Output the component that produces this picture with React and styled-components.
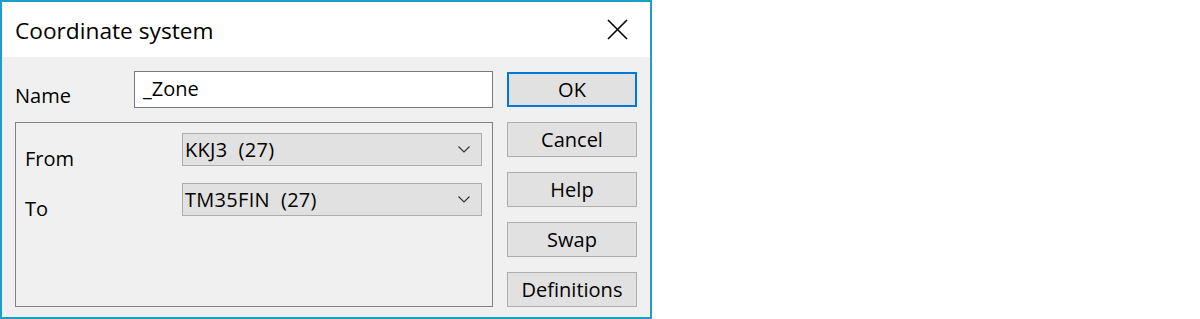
import styled, { createGlobalStyle } from "styled-components";

const Global = createGlobalStyle`
  body {
    margin: 0;
    background: #fff;
    font-family: "Open Sans", "Noto Sans", sans-serif;
  }
`;

const Window = styled.div`
  width: 652px;
  height: 319px;
  box-sizing: border-box;
  border: 2px solid #1c9fc4;
  background: #f0f0f0;
  display: flex;
  flex-direction: column;
`;

const TitleBar = styled.div`
  height: 55px;
  background: #fff;
  display: flex;
  align-items: center;
  justify-content: space-between;
  padding: 0 22px 0 13px;
`;

const Title = styled.span`
  font-size: 22.7px;
  color: #000;
  padding-top: 1px;
`;

const Body = styled.div`
  flex: 1;
  display: flex;
  gap: 14px;
  padding: 14px 0 10px 13px;
`;

const LeftCol = styled.div`
  width: 478px;
  display: flex;
  flex-direction: column;
  gap: 14px;
`;

const Row = styled.div`
  display: flex;
  align-items: flex-start;
  height: ${(p) => p.$h}px;
`;

const Label = styled.label`
  width: ${(p) => p.$w}px;
  font-size: 20px;
  color: #000;
  padding-top: ${(p) => p.$top}px;
  line-height: 20px;
`;

const TextInput = styled.div`
  width: 359px;
  height: 37px;
  box-sizing: border-box;
  border: 1px solid #7a7a7a;
  background: #fff;
  font-size: 20px;
  line-height: 33px;
  padding-left: 8px;
`;

const GroupBox = styled.div`
  flex: 1;
  border: 1px solid #828282;
  padding: 10px 10px 0 9px;
  display: flex;
  flex-direction: column;
  gap: 17px;
`;

const Combo = styled.div`
  width: 300px;
  height: 33px;
  box-sizing: border-box;
  border: 1px solid #adadad;
  background: #e1e1e1;
  display: flex;
  align-items: center;
  justify-content: space-between;
  padding: 0 11px 0 2px;
  font-size: 20px;
  letter-spacing: 0.3px;
  white-space: pre;
`;

const ButtonCol = styled.div`
  width: 130px;
  display: flex;
  flex-direction: column;
  gap: 15px;
  padding-top: 1px;
`;

const Button = styled.button`
  width: 130px;
  height: 35px;
  box-sizing: border-box;
  margin: 0;
  padding: 0;
  background: #e1e1e1;
  border: ${(p) => (p.$default ? "2px solid #0078d7" : "1px solid #adadad")};
  font-family: inherit;
  font-size: 20px;
  color: #000;
  line-height: 1;
`;

function Chevron() {
  return (
    <svg width="12" height="7" viewBox="0 0 12 7">
      <path d="M0.5 0.5 L6 6 L11.5 0.5" fill="none" stroke="#333" strokeWidth="1.1" />
    </svg>
  );
}

function CloseIcon() {
  return (
    <svg width="21" height="21" viewBox="0 0 21 21">
      <path d="M1 1 L20 20 M20 1 L1 20" stroke="#000" strokeWidth="1.6" />
    </svg>
  );
}

export default function App() {
  return (
    <>
      <Global />
      <Window>
        <TitleBar>
          <Title>Coordinate system</Title>
          <CloseIcon />
        </TitleBar>
        <Body>
          <LeftCol>
            <Row $h={37}>
              <Label $w={119} $top={15}>Name</Label>
              <TextInput>_Zone</TextInput>
            </Row>
            <GroupBox>
              <Row $h={33}>
                <Label $w={157} $top={16}>From</Label>
                <Combo>
                  {"KKJ3  (27)"}
                  <Chevron />
                </Combo>
              </Row>
              <Row $h={33}>
                <Label $w={157} $top={16}>To</Label>
                <Combo>
                  {"TM35FIN  (27)"}
                  <Chevron />
                </Combo>
              </Row>
            </GroupBox>
          </LeftCol>
          <ButtonCol>
            <Button $default>OK</Button>
            <Button>Cancel</Button>
            <Button>Help</Button>
            <Button>Swap</Button>
            <Button>Definitions</Button>
          </ButtonCol>
        </Body>
      </Window>
    </>
  );
}
